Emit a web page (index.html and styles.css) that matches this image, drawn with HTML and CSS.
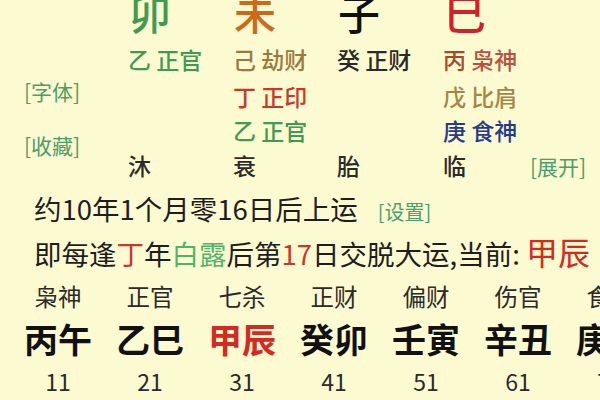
FILE: index.html
```html
<!DOCTYPE html>
<html lang="zh">
<head>
<meta charset="utf-8">
<link rel="stylesheet" href="styles.css">
</head>
<body>
<div class="page">
  <section class="pillars">
    <div class="big c-green col1">卯</div>
    <div class="big c-orange col2">未</div>
    <div class="big c-black col3">子</div>
    <div class="big c-red col4">巳</div>

    <div class="side">
      <span class="link">[字体]</span>
      <span class="link">[收藏]</span>
    </div>

    <div class="cell col1 r2 c-green">乙 正官</div>
    <div class="cell col2 r2 c-olive">己 劫财</div>
    <div class="cell col3 r2 c-dark">癸 正财</div>
    <div class="cell col4 r2"><span class="c-brown">丙</span> <span class="c-rust">枭神</span></div>

    <div class="cell col2 r3 c-redb">丁 正印</div>
    <div class="cell col4 r3 c-olive2">戊 比肩</div>

    <div class="cell col2 r4 c-green">乙 正官</div>
    <div class="cell col4 r4 c-navy">庚 食神</div>

    <div class="cell col1 r5 c-dark">沐</div>
    <div class="cell col2 r5 c-dark">衰</div>
    <div class="cell col3 r5 c-dark">胎</div>
    <div class="cell col4 r5 c-dark">临</div>
    <div class="cell col5 r5"><span class="link">[展开]</span></div>
  </section>

  <p class="line line1">约10年1个月零16日后上运<span class="link small">[设置]</span></p>
  <p class="line line2">即每逢<span class="c-redb">丁</span>年<span class="c-lgreen">白露</span>后第<span class="c-redb">17</span>日交脱大运,当前: <span class="cur">甲辰</span></p>

  <section class="dayun">
    <div class="dy"><span class="lab">枭神</span><span class="gz">丙午</span><span class="age">11</span></div>
    <div class="dy"><span class="lab">正官</span><span class="gz">乙巳</span><span class="age">21</span></div>
    <div class="dy"><span class="lab">七杀</span><span class="gz red">甲辰</span><span class="age">31</span></div>
    <div class="dy"><span class="lab">正财</span><span class="gz">癸卯</span><span class="age">41</span></div>
    <div class="dy"><span class="lab">偏财</span><span class="gz">壬寅</span><span class="age">51</span></div>
    <div class="dy"><span class="lab">伤官</span><span class="gz">辛丑</span><span class="age">61</span></div>
    <div class="dy"><span class="lab">食神</span><span class="gz">庚戌</span><span class="age">71</span></div>
  </section>
</div>
</body>
</html>
```
FILE: styles.css
```css
html, body {
  margin: 0;
  padding: 0;
  width: 600px;
  height: 400px;
  overflow: hidden;
  background: #fcfad1;
}
body {
  font-family: "Noto Sans CJK SC", "Noto Sans", sans-serif;
  color: #222;
}
.page {
  width: 600px;
  height: 400px;
  overflow: hidden;
}
.pillars {
  display: grid;
  grid-template-columns: 128px 105px 104px 106px 87px 1fr;
  grid-template-rows: 54px 37px 34px 35px 35px;
  margin-top: -12px;
  font-weight: 500;
}
.big {
  font-size: 42px;
  line-height: 48px;
  grid-row: 1;
  padding-left: 1px;
}
.cell {
  font-size: 23px;
  line-height: 35px;
  white-space: nowrap;
}
.col1 { grid-column: 2; }
.col2 { grid-column: 3; }
.col3 { grid-column: 4; }
.col4 { grid-column: 5; }
.col5 { grid-column: 6; }
.r2 { grid-row: 2; }
.r3 { grid-row: 3; }
.r4 { grid-row: 4; }
.r5 { grid-row: 5; }
.side {
  grid-column: 1;
  grid-row: 3 / 6;
  display: flex;
  flex-direction: column;
  gap: 27px;
  padding-left: 24px;
  padding-top: 0;
  margin-top: -1px;
}
.link {
  color: #4a9e6a;
  font-size: 21px;
  line-height: 27px;
  font-weight: 400;
}
.link.small { font-size: 20px; margin-left: 20px; }
.line {
  margin: 0;
  padding-left: 34px;
  font-size: 27.5px;
  white-space: nowrap;
  color: #1e1e1e;
  font-weight: 400;
}
.line1 { line-height: 44px; margin-top: 3px; }
.line2 { line-height: 42px; }
.cur { color: #d42a22; font-size: 32px; }
.dayun {
  display: grid;
  grid-template-columns: repeat(7, 92px);
  padding-left: 12px;
  margin-top: 0;
}
.dy {
  display: flex;
  flex-direction: column;
  align-items: center;
}
.lab { font-size: 23.5px; line-height: 44px; color: #2a2a2a; }
.gz { font-size: 34px; line-height: 42px; font-weight: bold; color: #111; }
.gz.red { color: #d42a22; }
.age { font-size: 23px; line-height: 42px; color: #2a2a2a; }

.c-green { color: #3f9a52; }
.c-lgreen { color: #4fb36a; }
.c-orange { color: #cc6a1a; }
.c-black { color: #111; }
.c-red { color: #d2202a; }
.c-olive { color: #9a7a3e; }
.c-olive2 { color: #a48646; }
.c-dark { color: #2a2a2a; }
.c-brown { color: #a44a2c; }
.c-rust { color: #bb5040; }
.c-redb { color: #c8382a; }
.c-navy { color: #253a8c; }
```
